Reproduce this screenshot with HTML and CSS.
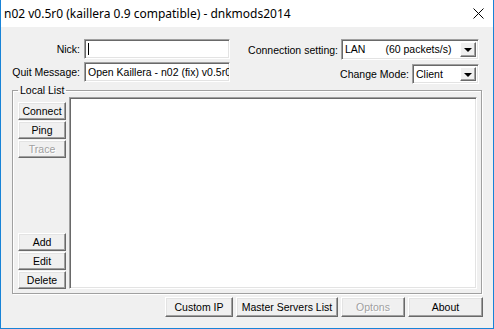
FILE: index.html
```html
<!DOCTYPE html>
<html lang="en">
<head>
    <meta charset="UTF-8">
    <meta name="viewport" content="width=device-width, initial-scale=1.0">
    <title>n02 v0.5r0</title>
    <link rel="stylesheet" href="styles.css">
</head>
<body>

<div class="window">
    <div class="titlebar">
        <span class="title">n02 v0.5r0 (kaillera 0.9 compatible) - dnkmods2014</span>
        <svg class="close" width="11" height="11" viewBox="0 0 11 11">
            <path d="M0.5 0.5 L10.5 10.5 M10.5 0.5 L0.5 10.5" stroke="#000" stroke-width="1" fill="none"/>
        </svg>
    </div>

    <div class="client">
        <!-- nick / connection settings -->
        <div class="top">
            <div class="fields">
                <label>Nick:</label>
                <div class="edit"><span class="caret"></span></div>
                <label>Quit Message:</label>
                <div class="edit">Open Kaillera - n02 (fix) v0.5r0</div>
            </div>
            <div class="settings">
                <div class="setting-row row-conn">
                    <label>Connection setting:</label>
                    <div class="combo combo-wide">
                        <span class="combo-text">LAN<span class="rate">(60 packets/s)</span></span>
                        <span class="combo-btn"><span class="arrow"></span></span>
                    </div>
                </div>
                <div class="setting-row row-mode">
                    <label>Change Mode:</label>
                    <div class="combo combo-small">
                        <span class="combo-text">Client</span>
                        <span class="combo-btn"><span class="arrow"></span></span>
                    </div>
                </div>
            </div>
        </div>

        <!-- local server list -->
        <fieldset class="group">
            <legend>Local List</legend>
            <div class="group-body">
                <div class="side-buttons">
                    <button>Connect</button>
                    <button>Ping</button>
                    <button disabled>Trace</button>
                    <button class="push-down">Add</button>
                    <button>Edit</button>
                    <button>Delete</button>
                </div>
                <div class="listbox"></div>
            </div>
        </fieldset>

        <!-- bottom buttons -->
        <div class="footer">
            <button class="btn-custom">Custom IP</button>
            <button class="btn-master">Master Servers List</button>
            <button class="btn-options" disabled>Optons</button>
            <button class="btn-about">About</button>
        </div>
    </div>
</div>

</body>
</html>
```

FILE: styles.css
```css
* {
    box-sizing: border-box;
}
html, body {
    margin: 0;
    padding: 0;
}
body {
    font-family: "Liberation Sans", Arial, sans-serif;
    font-size: 10.5px;
    color: #000;
    background: #fff;
}
.window {
    width: 494px;
    height: 329px;
    border: 1px solid #1883d7;
    border-top: none;
    display: flex;
    flex-direction: column;
}
.titlebar {
    height: 27px;
    flex: none;
    background: #fff;
    display: flex;
    align-items: center;
    justify-content: space-between;
    padding: 0 9px 0 3px;
}
.title {
    font-family: "Noto Sans", sans-serif;
    font-size: 12px;
}
.close {
    display: block;
}
.client {
    flex: 1;
    background: #f0f0f0;
    display: flex;
    flex-direction: column;
    padding: 12px 0 11px 0;
}
.top {
    display: flex;
    justify-content: space-between;
    padding-right: 14px;
}
.fields {
    display: grid;
    grid-template-columns: 79px 146px;
    grid-auto-rows: 20px;
    column-gap: 4px;
    row-gap: 3px;
    align-items: center;
}
.fields label,
.settings label {
    text-align: right;
    white-space: nowrap;
}
.settings {
    display: flex;
    flex-direction: column;
    gap: 4px;
}
.setting-row {
    display: flex;
    justify-content: flex-end;
    align-items: center;
    gap: 3px;
}
.row-conn {
    height: 21px;
}
.row-mode {
    height: 20px;
}
.edit,
.combo,
.listbox {
    background: #fff;
    border: 1px solid;
    border-color: #a0a0a0 #fff #fff #a0a0a0;
    box-shadow: inset 1px 1px #696969, inset -1px -1px #e3e3e3;
}
.edit {
    height: 20px;
    padding: 2px 3px;
    line-height: 14px;
    white-space: nowrap;
    overflow: hidden;
}
.caret {
    display: inline-block;
    width: 1px;
    height: 12px;
    margin-top: 1px;
    background: #000;
    vertical-align: top;
}
.combo {
    height: 100%;
    display: flex;
    align-items: stretch;
    padding: 2px;
}
.combo-wide {
    width: 138px;
}
.combo-small {
    width: 67px;
}
.combo-text {
    flex: 1;
    padding-left: 1px;
    line-height: 15px;
    white-space: nowrap;
    overflow: hidden;
}
.rate {
    margin-left: 20px;
}
.combo-btn {
    width: 16px;
    background: #f0f0f0;
    border: 1px solid;
    border-color: #fff #696969 #696969 #fff;
    box-shadow: inset -1px -1px #a0a0a0;
    display: flex;
    align-items: center;
    justify-content: center;
}
.arrow {
    width: 0;
    height: 0;
    border-left: 4px solid transparent;
    border-right: 4px solid transparent;
    border-top: 4px solid #000;
    margin-top: 1px;
}
.group {
    flex: 1;
    margin: 0 11px 0 11px;
    padding: 1px 4px 4px 5px;
    border: 1px solid #a0a0a0;
    box-shadow: inset 1px 1px #fff, 1px 1px #fff;
    min-width: 0;
    display: flex;
    flex-direction: column;
}
.group legend {
    padding: 0 2px;
    margin-left: 0;
    line-height: 12px;
}
.group-body {
    flex: 1;
    display: flex;
    gap: 3px;
}
.side-buttons {
    width: 48px;
    display: flex;
    flex-direction: column;
    gap: 1px;
    padding-top: 5px;
}
.side-buttons button {
    height: 18px;
}
.push-down {
    margin-top: auto;
}
.listbox {
    flex: 1;
}
button {
    font-family: "Liberation Sans", Arial, sans-serif;
    font-size: 10.5px;
    color: #000;
    background: #f0f0f0;
    border: 1px solid;
    border-color: #fff #696969 #696969 #fff;
    box-shadow: inset -1px -1px #a0a0a0, inset 1px 1px #e3e3e3;
    border-radius: 0;
    padding: 0;
    margin: 0;
    white-space: nowrap;
}
button:disabled {
    color: #a0a0a0;
    text-shadow: 1px 1px #fff;
}
.footer {
    display: flex;
    justify-content: flex-end;
    gap: 3px;
    margin-top: 3px;
    padding-right: 10px;
}
.footer button {
    height: 20px;
}
.btn-custom {
    width: 68px;
}
.btn-master {
    width: 102px;
}
.btn-options {
    width: 64px;
}
.btn-about {
    width: 75px;
}
```
